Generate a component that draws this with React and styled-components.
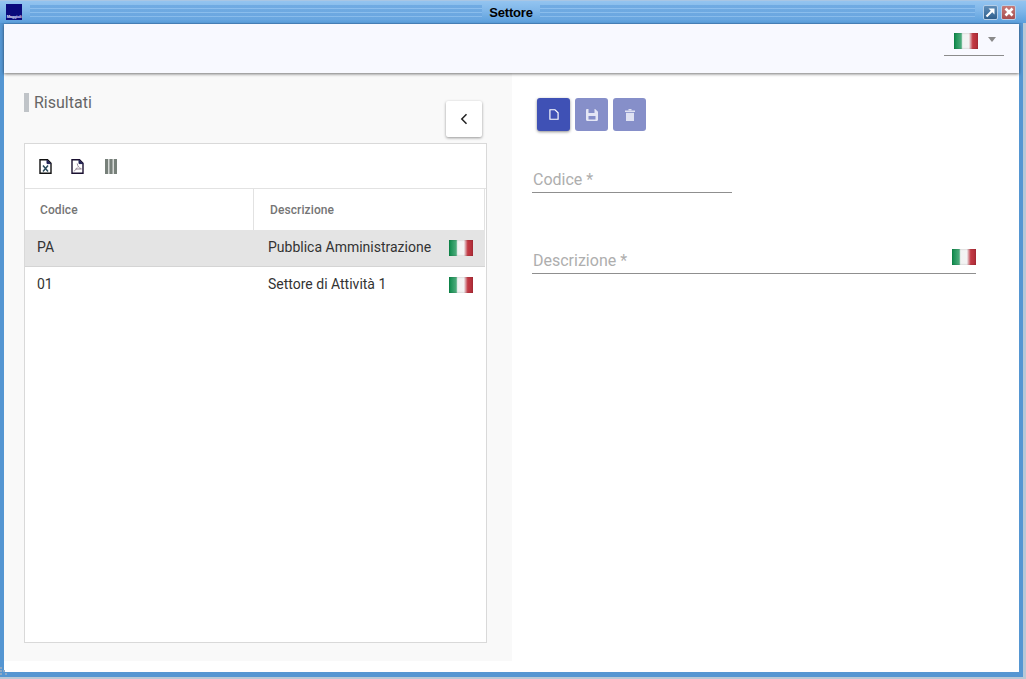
import React from "react";
import styled, { createGlobalStyle } from "styled-components";

const GlobalStyle = createGlobalStyle`
  html, body { margin: 0; padding: 0; background: #fff; overflow: hidden; }
  body { font-family: Roboto, "Liberation Sans", sans-serif; }
`;

const Window = styled.div`
  position: relative;
  width: 1026px;
  height: 679px;
  box-sizing: border-box;
  display: flex;
  flex-direction: column;
  background: #b9c8d6;
  padding: 0 3px 2px 0;
`;

const TitleBar = styled.div`
  height: 23px;
  margin-right: -3px;
  flex: none;
  box-sizing: border-box;
  display: flex;
  align-items: center;
  padding: 0 10px 0 6px;
  border-top: 1px solid #a9c6e4;
  background: linear-gradient(#93c4f0 0%, #7fb6e9 45%, #5b9fdc 100%);
`;

const AppLogo = styled.div`
  width: 16px;
  height: 16px;
  margin-right: 8px;
  flex: none;
  background: #0a0a7c;
  display: flex;
  align-items: flex-end;
  justify-content: center;
  overflow: hidden;
  color: #e8e8ff;
  font: bold 4px/6px "Liberation Sans", sans-serif;
  letter-spacing: -0.2px;
`;

const Stripes = styled.div`
  flex: ${(p) => (p.$width ? "none" : "1")};
  width: ${(p) => (p.$width ? `${p.$width}px` : "auto")};
  height: 15px;
  background: repeating-linear-gradient(#6aa6e0 0, #6aa6e0 3px, #8fc0ee 3px, #8fc0ee 4px);
  opacity: 0.8;
`;

const WindowTitle = styled.div`
  width: 58px;
  flex: none;
  text-align: center;
  font: bold 13px "Liberation Sans", sans-serif;
  letter-spacing: -0.2px;
  color: #000;
`;

const WinButtons = styled.div`
  display: flex;
  gap: 3px;
  margin-left: 8px;
  flex: none;
`;

const WinButton = styled.div`
  width: 15px;
  height: 15px;
  box-sizing: border-box;
  border-radius: 2px;
  border: 1px solid #b5cee8;
  display: flex;
  align-items: center;
  justify-content: center;
  background: ${(p) => (p.$close ? "linear-gradient(#c77a78, #a84e4e)" : "linear-gradient(#5f8db8, #2f5f8c)")};
`;

const Frame = styled.div`
  flex: 1;
  min-height: 0;
  display: flex;
  flex-direction: column;
  background: #fff;
  border-left: 4px solid #5596d2;
  border-right: 4px solid #5596d2;
  border-bottom: 5px solid #5596d2;
  border-top: 1px solid #4d8cc8;
`;

const ResizeGrip = styled.svg`
  position: absolute;
  left: 0;
  bottom: 3px;
`;

const Header = styled.div`
  height: 49px;
  flex: none;
  box-sizing: border-box;
  background: #f8f9ff;
  box-shadow: 0 1px 3px rgba(0, 0, 0, 0.55);
  display: flex;
  justify-content: flex-end;
  padding: 0 15px 0 0;
  position: relative;
  z-index: 1;
`;

const LangSelect = styled.div`
  width: 60px;
  height: 32px;
  box-sizing: border-box;
  border-bottom: 1px solid #8c8c8c;
  display: flex;
  align-items: flex-start;
  padding: 9px 0 0 10px;
`;

const Caret = styled.div`
  width: 0;
  height: 0;
  margin: 4px 0 0 10px;
  border-left: 4px solid transparent;
  border-right: 4px solid transparent;
  border-top: 5px solid #8a8a8a;
`;

const FlagBox = styled.div`
  width: 24px;
  height: 16px;
  flex: none;
  background: linear-gradient(90deg, #0c8a4a 0%, #4dab7c 30%, #f2f2f2 36%, #f4f4f4 62%, #dcaab0 68%, #c23a44 78%, #b02c38 100%);
  box-shadow: inset 0 0 2px rgba(0, 0, 0, 0.25);
`;

const RowFlag = styled(FlagBox)`
  margin-top: 2px;
`;

const Body = styled.div`
  flex: 1;
  min-height: 0;
  display: flex;
`;

const LeftPanel = styled.div`
  width: 508px;
  height: 588px;
  flex: none;
  box-sizing: border-box;
  background: #f9f9f9;
  padding: 20px 25px 18px 20px;
  display: flex;
  flex-direction: column;
`;

const PanelHead = styled.div`
  display: flex;
  justify-content: space-between;
  align-items: flex-start;
  height: 50px;
  flex: none;
  padding-right: 5px;
`;

const PanelTitle = styled.h2`
  margin: 0;
  height: 19px;
  border-left: 5px solid #c0c4c8;
  padding-left: 5px;
  font: 400 16px/19px Roboto, sans-serif;
  color: #666;
`;

const BackButton = styled.button`
  width: 36px;
  height: 36px;
  margin-top: 8px;
  border: 0;
  padding: 0;
  background: #fff;
  border-radius: 2px;
  box-shadow: 0 1px 3px rgba(0, 0, 0, 0.4);
  display: flex;
  align-items: center;
  justify-content: center;
`;

const TableCard = styled.div`
  flex: 1;
  min-height: 0;
  background: #fff;
  border: 1px solid #d9d9d9;
`;

const TableTools = styled.div`
  height: 45px;
  box-sizing: border-box;
  display: flex;
  align-items: center;
  gap: 19px;
  padding: 0 0 0 14px;
  border-bottom: 1px solid #e2e2e2;
`;

const ColumnsToggle = styled.span`
  display: flex;
  margin-left: 2px;
`;

const Grid = styled.div`
  display: grid;
  grid-template-columns: 229px 1fr;
  border-bottom: ${(p) => (p.$head || p.$plain ? "0" : "1px solid #d4d4d4")};
  background: ${(p) => (p.$selected ? "#e4e4e4" : "#fff")};
  height: ${(p) => (p.$head ? "41px" : p.$plain ? "36px" : "37px")};
  box-sizing: border-box;
  margin-right: 1px;
`;

const HeadCell = styled.div`
  display: flex;
  align-items: center;
  padding-left: ${(p) => p.$inset || 15}px;
  font: 500 12px Roboto, sans-serif;
  letter-spacing: 0.1px;
  color: #757575;
  border-right: 1px solid #e2e2e2;
`;

const Cell = styled.div`
  display: flex;
  align-items: center;
  justify-content: space-between;
  padding: 0 12px 2px ${(p) => p.$inset || 12}px;
  font: 400 14px Roboto, sans-serif;
  color: #333;
`;

const RightPanel = styled.div`
  flex: 1;
  padding: 25px 43px 0 20px;
  display: flex;
  flex-direction: column;
`;

const ActionBar = styled.div`
  display: flex;
  gap: 5px;
  padding-left: 5px;
  margin-bottom: 34px;
`;

const ActionButton = styled.button`
  width: 33px;
  height: 33px;
  border: 0;
  padding: 0;
  border-radius: 3px;
  display: flex;
  align-items: center;
  justify-content: center;
  background: ${(p) => (p.disabled ? "#868fc9" : "#3f51b5")};
  box-shadow: ${(p) => (p.disabled ? "none" : "0 1px 3px rgba(0, 0, 0, 0.45)")};
`;

const Field = styled.div`
  width: ${(p) => p.$width}px;
  height: 28px;
  box-sizing: border-box;
  border-bottom: 1px solid #8f8f8f;
  display: flex;
  align-items: flex-end;
  justify-content: space-between;
  margin-bottom: ${(p) => p.$gap || 0}px;
`;

const FieldLabel = styled.label`
  font: 400 16px/24px Roboto, sans-serif;
  color: #aeaeae;
  padding-left: 1px;
`;

const FieldFlag = styled(FlagBox)`
  margin-bottom: 8px;
`;

const FileXls = () => (
  <svg width="13" height="15" viewBox="0 0 13 15" fill="none">
    <path d="M1 .8h7.5L12 4.3v9.9H1z" stroke="#111" strokeWidth="1.4" />
    <path d="M8 1v3.6h4" fill="#225" stroke="#225" />
    <path d="M4 6.5l5 6M9 6.5l-5 6" stroke="#2b4a5a" strokeWidth="1.5" />
  </svg>
);

const FilePdf = () => (
  <svg width="13" height="15" viewBox="0 0 13 15" fill="none">
    <path d="M1 .8h7.5L12 4.3v9.9H1z" stroke="#1a1030" strokeWidth="1.4" />
    <path d="M8 1v3.6h4" fill="#225" stroke="#225" />
    <path d="M6.2 4.5c.6 3 1.6 4.6 4.2 5.2M6.2 8.5c-1 2-2 3-3.4 3.6M4.5 10h6" stroke="#9a8a9a" strokeWidth="1" />
  </svg>
);

const ColumnsIcon = () => (
  <svg width="12" height="15" viewBox="0 0 12 15" fill="#77807a">
    <rect x="0" y="0" width="3.3" height="15" />
    <rect x="4.350" y="0" width="3.3" height="15" />
    <rect x="8.700" y="0" width="3.3" height="15" />
  </svg>
);

const NewIcon = () => (
  <svg width="10" height="11" viewBox="0 0 11 12" fill="none">
    <path d="M1 .8h5.6L10 4.2v7H1z" stroke="#fff" strokeWidth="1.3" />
  </svg>
);

const SaveIcon = () => (
  <svg width="12" height="12" viewBox="0 0 12 12">
    <path d="M0 1.2C0 .5.5 0 1.2 0h8L12 2.8v8c0 .7-.5 1.2-1.2 1.2H1.2C.5 12 0 11.500 0 10.800z" fill="#e4e6f5" />
    <rect x="2.500" y="0" width="6" height="4" fill="#868fc9" />
    <rect x="2.500" y="7" width="7" height="3.500" fill="#868fc9" />
  </svg>
);

const TrashIcon = () => (
  <svg width="10" height="12" viewBox="0 0 10 12" fill="#dfe2f3">
    <rect x="0" y="1.500" width="10" height="1.500" />
    <rect x="3.500" y="0" width="3" height="1.500" />
    <path d="M1 3.800h8V12H1z" />
  </svg>
);

export default function App() {
  return (
    <>
      <GlobalStyle />
      <Window>
        <TitleBar>
          <AppLogo>Maggioli</AppLogo>
          <Stripes $width={452} />
          <WindowTitle>Settore</WindowTitle>
          <Stripes />
          <WinButtons>
            <WinButton>
              <svg width="11" height="11" viewBox="0 0 11 11" fill="none">
                <path d="M1.500 9.500L8 3" stroke="#fff" strokeWidth="2.200" />
                <path d="M3.500 1.500h6v6z" fill="#fff" />
              </svg>
            </WinButton>
            <WinButton $close>
              <svg width="10" height="10" viewBox="0 0 10 10">
                <path d="M1.500 1.500l7 7M8.500 1.500l-7 7" stroke="#fff" strokeWidth="2.600" />
              </svg>
            </WinButton>
          </WinButtons>
        </TitleBar>
        <Frame>
          <Header>
            <LangSelect>
              <FlagBox />
              <Caret />
            </LangSelect>
          </Header>
          <Body>
            <LeftPanel>
              <PanelHead>
                <PanelTitle>Risultati</PanelTitle>
                <BackButton aria-label="Indietro">
                  <svg width="8" height="12" viewBox="0 0 8 12" fill="none">
                    <path d="M6.500 1.200L1.800 6l4.700 4.800" stroke="#222" strokeWidth="1.500" />
                  </svg>
                </BackButton>
              </PanelHead>
              <TableCard>
                <TableTools>
                  <FileXls />
                  <FilePdf />
                  <ColumnsToggle><ColumnsIcon /></ColumnsToggle>
                </TableTools>
                <Grid $head>
                  <HeadCell>Codice</HeadCell>
                  <HeadCell $inset={16}>Descrizione</HeadCell>
                </Grid>
                <Grid $selected>
                  <Cell>PA</Cell>
                  <Cell $inset={14}>
                    Pubblica Amministrazione
                    <RowFlag />
                  </Cell>
                </Grid>
                <Grid $plain>
                  <Cell>01</Cell>
                  <Cell $inset={14}>
                    Settore di Attività 1
                    <RowFlag />
                  </Cell>
                </Grid>
              </TableCard>
            </LeftPanel>
            <RightPanel>
              <ActionBar>
                <ActionButton aria-label="Nuovo"><NewIcon /></ActionButton>
                <ActionButton aria-label="Salva" disabled><SaveIcon /></ActionButton>
                <ActionButton aria-label="Elimina" disabled><TrashIcon /></ActionButton>
              </ActionBar>
              <Field $width={200} $gap={53}>
                <FieldLabel>Codice *</FieldLabel>
              </Field>
              <Field $width={444}>
                <FieldLabel>Descrizione *</FieldLabel>
                <FieldFlag />
              </Field>
            </RightPanel>
          </Body>
        </Frame>
        <ResizeGrip width="8" height="9" viewBox="0 0 8 9" fill="#8fa9c4">
          <rect x="0" y="0" width="2" height="2" />
          <rect x="0" y="3" width="2" height="2" />
          <rect x="3" y="3" width="2" height="2" />
          <rect x="0" y="6" width="2" height="2" />
          <rect x="5" y="6" width="2" height="2" />
        </ResizeGrip>
      </Window>
    </>
  );
}
